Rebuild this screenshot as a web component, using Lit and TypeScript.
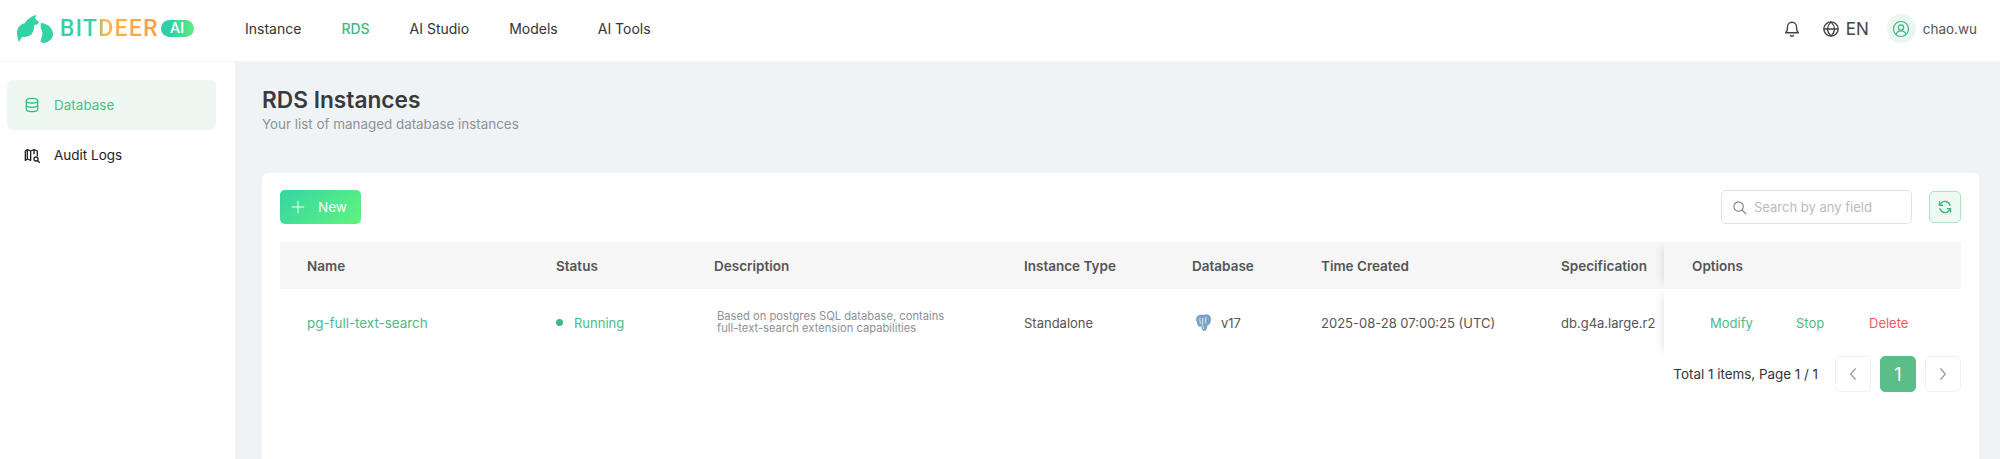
import { LitElement, html, css, svg } from "lit";
import { customElement } from "lit/decorators.js";

const COLS = ["Name", "Status", "Description", "Instance Type", "Database", "Time Created", "Specification"];

@customElement("app-root")
export class AppRoot extends LitElement {
  static styles = css`
    :host { display: block; width: 2000px; height: 459px; overflow: hidden; font-family: Inter, "Liberation Sans", sans-serif; color: #333; background: #eff3f6; }
    svg { display: block; flex: none; }
    .top { height: 61px; background: #fff; display: flex; align-items: center; box-shadow: 0 1px 0 #f3f5f7; box-sizing: border-box; position: relative; padding-bottom: 4px; }
    .logo { width: 245px; display: flex; align-items: center; padding-left: 16px; box-sizing: border-box; flex: none; }
    .brand { font-family: Roboto, "Liberation Sans", sans-serif; font-weight: 500; font-size: 23px; letter-spacing: 1.2px; line-height: 28px; margin-left: 6px; background: linear-gradient(90deg, #33d1a8 0 36%, #fbb84a 44%, #fd9b3e 100%); -webkit-background-clip: text; background-clip: text; color: transparent; }
    .pill { width: 33px; height: 17px; border-radius: 9px; background: linear-gradient(90deg, #2fd0a6 30%, #61ec7c); color: #fff; font-size: 15px; font-weight: 500; line-height: 17px; text-align: center; font-family: Roboto, sans-serif; margin-left: 2px; }
    nav { display: flex; gap: 40px; font-size: 14px; color: #333; }
    nav .on { color: #41b883; font-weight: 500; }
    .right { margin-left: auto; display: flex; align-items: center; padding-right: 23px; color: #444; }
    .gap { width: 21px; }
    .en { font-size: 17px; margin: 0 18px 0 6px; }
    .avatar { width: 29px; height: 29px; border-radius: 50%; background: #ebf6f1; display: flex; align-items: center; justify-content: center; margin-right: 7px; }
    .user { font-size: 13.5px; color: #555; }
    .body { display: flex; height: 398px; }
    aside { width: 235px; background: #fff; padding: 19px 7px 0; box-sizing: border-box; flex: none; }
    .side { height: 50px; display: flex; align-items: center; gap: 14px; padding-left: 17px; border-radius: 6px; font-size: 13.5px; color: #222; width: 209px; box-sizing: border-box; }
    .side.on { background: #edf8f3; color: #4fbd8a; }
    main { flex: 1; padding: 25px 21px 0 27px; min-width: 0; }
    h1 { margin: 0; font-size: 22.7px; line-height: 28px; font-weight: 600; color: #3a3a3a; }
    .sub { font-size: 13.4px; line-height: 18px; color: #8c9298; margin-top: 1px; }
    .card { margin-top: 40px; background: #fff; border-radius: 6px 6px 0 0; height: 300px; padding: 17px 18px 0; box-sizing: border-box; }
    .bar { display: flex; align-items: center; height: 34px; }
    .new { width: 81px; height: 34px; border-radius: 5px; background: linear-gradient(135deg, #37d4a4, #5ff57c); color: #fff; font-size: 13.5px; display: flex; align-items: center; gap: 13px; padding-left: 11px; box-sizing: border-box; }
    .search { margin-left: auto; width: 191px; height: 34px; border: 1px solid #dfe3e8; border-radius: 5px; box-sizing: border-box; display: flex; align-items: center; gap: 7px; padding-left: 10px; color: #b6bcc4; font-size: 13px; background: #fff; }
    .refresh { margin-left: 17px; width: 32px; height: 32px; border: 1px solid #aee3c8; border-radius: 5px; background: #eef9f3; display: flex; align-items: center; justify-content: center; box-sizing: border-box; }
    .table { margin-top: 18px; display: grid; grid-template-columns: 249px 158px 310px 168px 129px 240px 130px 1fr; }
    .th { height: 47px; background: #f6f6f6; display: flex; align-items: center; font-size: 13.5px; font-weight: 600; color: #555; padding-left: 27px; box-sizing: border-box; }
    .td { height: 67px; display: flex; align-items: center; font-size: 13px; color: #555; padding-left: 27px; box-sizing: border-box; }
    .fixed { box-shadow: -8px 0 8px -6px rgba(0,0,0,.1); position: relative; padding-left: 28px; }
    .th.fixed { background: #f6f6f6; }
    .td.fixed { background: #fff; padding-left: 0; }
    .link { color: #4cbb87; }
    .big { font-size: 13.4px; }
    .dot { width: 7px; height: 7px; border-radius: 50%; background: #41b883; margin-right: 11px; }
    .desc { font-size: 11.2px; line-height: 11.5px; color: #8d9196; padding-left: 3px; }
    .pgicon { margin: 0 9px 0 3px; }
    .ops { display: flex; font-size: 13px; color: #4cbb87; padding-left: 46px; }
    .ops span:nth-child(1) { width: 86px; }
    .ops span:nth-child(2) { width: 73px; }
    .ops span:nth-child(3) { color: #f5585c; }
    .pg { display: flex; justify-content: flex-end; align-items: center; height: 36px; font-size: 13.4px; color: #333; }
    .pg .total { margin-right: 17px; }
    .pb { width: 36px; height: 36px; border: 1px solid #f0f1f3; border-radius: 5px; box-sizing: border-box; display: flex; align-items: center; justify-content: center; margin-left: 9px; color: #fff; }
    .pb:first-of-type { margin-left: 0; }
    .pb.on { background: #5bbd8a; border-color: #5bbd8a; font-size: 18px; }
  `;

  private ico(w: number, c: string, body: unknown, sw = 1.6) {
    return html`<svg width=${w} height=${w} viewBox="0 0 24 24" fill="none" stroke=${c} stroke-width=${sw} stroke-linecap="round" stroke-linejoin="round">${body}</svg>`;
  }

  render() {
    return html`
      <div class="top">
        <div class="logo">
          <svg width="38" height="28" viewBox="0 0 38 28">
            <path fill="#35d2a6" d="M1 18C1 12 5 9 9 8c2-4 7-7 11-8 1 1-1 2-1 3 1 2 3 3 4 4l-2 3c-2-1-3 0-3 2 0 4-2 8-5 9-3 1-6 1-7 1l-3 5C2 24 1 21 1 18z"/>
            <path fill="#35d2a6" d="M25 8c6 0 12 5 12 11 0 5-4 8-9 9-3 0-4-2-3-4 1-3 2-5 1-8-1-2-2-4-1-8z"/>
          </svg>
          <span class="brand">BITDEER</span><span class="pill">AI</span>
        </div>
        <nav><span>Instance</span><span class="on">RDS</span><span>AI Studio</span><span>Models</span><span>AI Tools</span></nav>
        <div class="right">
          ${this.ico(18, "#444", svg`<path d="M18 9a6 6 0 0 0-12 0c0 6-2.500 8-2.500 8h17S18 15 18 9z"/><path d="M10 20.500a2.200 2.200 0 0 0 4 0"/>`, 1.8)}
          <span class="gap"></span>
          ${this.ico(18, "#444", svg`<circle cx="12" cy="12" r="9.500"/><path d="M2.500 12h19M12 2.500c6 6 6 13 0 19M12 2.500c-6 6-6 13 0 19"/>`, 1.8)}
          <span class="en">EN</span>
          <div class="avatar">${this.ico(18, "#41b883", svg`<circle cx="12" cy="12" r="10"/><circle cx="12" cy="10" r="3.500"/><path d="M5.500 19c1-3.500 4-4.500 6.500-4.500s5.500 1 6.500 4.500"/>`)}</div>
          <span class="user">chao.wu</span>
        </div>
      </div>
      <div class="body">
        <aside>
          <div class="side on">
            ${this.ico(16, "#41b883", svg`<ellipse cx="12" cy="5.500" rx="8.500" ry="3.500"/><path d="M3.500 5.500v13c0 2 3.800 3.500 8.500 3.500s8.500-1.500 8.500-3.500v-13M3.500 12c0 2 3.800 3.500 8.500 3.500s8.500-1.500 8.500-3.500"/>`, 2)}
            <span>Database</span>
          </div>
          <div class="side">
            ${this.ico(16, "#222", svg`<path d="M10 20l-5-2-3 2V6l3-2 5 2 5-2 5 2v7M5 4v14M10 6v14M15 4v6"/><circle cx="18" cy="18" r="3"/><path d="M20.500 20.500L23 23"/>`, 2)}
            <span>Audit Logs</span>
          </div>
        </aside>
        <main>
          <h1>RDS Instances</h1>
          <div class="sub">Your list of managed database instances</div>
          <div class="card">
            <div class="bar">
              <div class="new">${this.ico(14, "#fff", svg`<path d="M12 2v20M2 12h20"/>`)}<span>New</span></div>
              <div class="search">
                ${this.ico(15, "#7c8590", svg`<circle cx="10.500" cy="10.500" r="7.500"/><path d="M16 16l6 6"/>`, 1.8)}
                <span>Search by any field</span>
              </div>
              <div class="refresh">
                ${this.ico(14, "#41b883", svg`<path d="M20.500 9A9 9 0 0 0 5 5.500L2.500 9M3.500 15A9 9 0 0 0 19 18.500l2.500-3.500"/><path d="M2.500 3.500V9H8M21.500 20.500V15H16"/>`, 2.4)}
              </div>
            </div>
            <div class="table">
              ${COLS.map((c) => html`<div class="th">${c}</div>`)}
              <div class="th fixed">Options</div>
              <div class="td link big">pg-full-text-search</div>
              <div class="td link"><span class="dot"></span>Running</div>
              <div class="td"><div class="desc">Based on postgres SQL database, contains<br />full-text-search extension capabilities</div></div>
              <div class="td">Standalone</div>
              <div class="td">
                <svg class="pgicon" width="17" height="18" viewBox="0 0 20 20">
                  <path fill="#7ba3c6" stroke="#5d8bb0" stroke-width=".7" d="M2 4C3 1 7 0 10 1c3-1 7-1 8 2 1 3 0 6-1 8-1 1-2 2-3 1 0 3 0 6-3 7-2 0-3-2-3-5 0-1-1-1-2 0C4 14 3 12 3 10 2 8 1.500 6 2 4z"/>
                  <path fill="none" stroke="#fff" stroke-width=".9" d="M9 4v8c0 1 1 3 1 5M13 3c-1 3-1 6 0 8M6 4c-1 2 0 5 1 7"/>
                </svg>v17
              </div>
              <div class="td">2025-08-28 07:00:25 (UTC)</div>
              <div class="td">db.g4a.large.r2</div>
              <div class="td fixed"><div class="ops"><span>Modify</span><span>Stop</span><span>Delete</span></div></div>
            </div>
            <div class="pg">
              <span class="total">Total 1 items, Page 1 / 1</span>
              <div class="pb">${this.ico(14, "#9a9a9a", svg`<path d="M16 3l-8 9 8 9"/>`, 2)}</div>
              <div class="pb on">1</div>
              <div class="pb">${this.ico(14, "#9a9a9a", svg`<path d="M8 3l8 9-8 9"/>`, 2)}</div>
            </div>
          </div>
        </main>
      </div>
    `;
  }
}
